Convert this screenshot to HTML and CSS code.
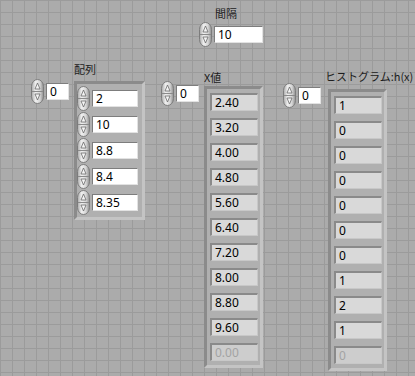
FILE: index.html
```html
<!DOCTYPE html>
<html lang="ja">
<head>
  <meta charset="UTF-8" />
  <title>Histogram panel</title>
  <link rel="stylesheet" href="styles.css">
</head>
<body>

  <!-- shared spinner glyph -->
  <svg class="defs" width="0" height="0">
    <defs>
      <linearGradient id="pillg" x1="0" y1="0" x2="1" y2="0">
        <stop offset="0" stop-color="#a9a9a9"/>
        <stop offset="0.35" stop-color="#f0f0f0"/>
        <stop offset="0.7" stop-color="#d6d6d6"/>
        <stop offset="1" stop-color="#8e8e8e"/>
      </linearGradient>
      <symbol id="spin" viewBox="0 0 13 25">
        <rect x="0.5" y="0.5" width="12" height="24" rx="6" ry="7" fill="url(#pillg)" stroke="#7c7c7c"/>
        <line x1="1" y1="12.5" x2="12" y2="12.5" stroke="#8a8a8a"/>
        <polygon points="6.5,4 4,10 9,10" fill="#f4f4f4" stroke="#6a6a6a" stroke-width="0.8"/>
        <polygon points="6.5,21 4,15 9,15" fill="#f4f4f4" stroke="#6a6a6a" stroke-width="0.8"/>
      </symbol>
    </defs>
  </svg>

  <div class="panel">

    <!-- 間隔 -->
    <div class="interval">
      <div class="label interval-label">間隔</div>
      <div class="numeric">
        <svg class="spin"><use href="#spin"/></svg>
        <div class="box box-wide">10</div>
      </div>
    </div>

    <div class="arrays">

      <!-- 配列 -->
      <div class="group group-src">
        <div class="numeric index">
          <svg class="spin"><use href="#spin"/></svg>
          <div class="box box-index">0</div>
        </div>
        <div class="col">
          <div class="label">配列</div>
          <div class="frame frame-ctl">
            <div class="numeric"><svg class="spin"><use href="#spin"/></svg><div class="box">2</div></div>
            <div class="numeric"><svg class="spin"><use href="#spin"/></svg><div class="box">10</div></div>
            <div class="numeric"><svg class="spin"><use href="#spin"/></svg><div class="box">8.8</div></div>
            <div class="numeric"><svg class="spin"><use href="#spin"/></svg><div class="box">8.4</div></div>
            <div class="numeric"><svg class="spin"><use href="#spin"/></svg><div class="box">8.35</div></div>
          </div>
        </div>
      </div>

      <!-- X値 -->
      <div class="group group-x">
        <div class="numeric index">
          <svg class="spin"><use href="#spin"/></svg>
          <div class="box box-index">0</div>
        </div>
        <div class="col">
          <div class="label">X値</div>
          <div class="frame frame-ind">
            <div class="ind">2.40</div>
            <div class="ind">3.20</div>
            <div class="ind">4.00</div>
            <div class="ind">4.80</div>
            <div class="ind">5.60</div>
            <div class="ind">6.40</div>
            <div class="ind">7.20</div>
            <div class="ind">8.00</div>
            <div class="ind">8.80</div>
            <div class="ind">9.60</div>
            <div class="ind empty">0.00</div>
          </div>
        </div>
      </div>

      <!-- ヒストグラム -->
      <div class="group group-hist">
        <div class="numeric index">
          <svg class="spin"><use href="#spin"/></svg>
          <div class="box box-index">0</div>
        </div>
        <div class="col">
          <div class="label">ヒストグラム:h(x)</div>
          <div class="frame frame-ind">
            <div class="ind">1</div>
            <div class="ind">0</div>
            <div class="ind">0</div>
            <div class="ind">0</div>
            <div class="ind">0</div>
            <div class="ind">0</div>
            <div class="ind">0</div>
            <div class="ind">1</div>
            <div class="ind">2</div>
            <div class="ind">1</div>
            <div class="ind empty">0</div>
          </div>
        </div>
      </div>

    </div>
  </div>

</body>
</html>
```

FILE: styles.css
```css
* {
  box-sizing: border-box;
  margin: 0;
  padding: 0;
}

body {
  width: 415px;
  height: 376px;
  overflow: hidden;
  background-color: #ababab;
  background-image:
    linear-gradient(#9b9b9b 1px, transparent 1px),
    linear-gradient(90deg, #9b9b9b 1px, transparent 1px);
  background-size: 12px 12px;
  font-family: 'Noto Sans', 'Noto Sans CJK JP', sans-serif;
  font-size: 12px;
  color: #000;
}

.defs {
  display: block;
}

.panel {
  padding-top: 6px;
}

.label {
  font-family: 'Noto Sans CJK JP', sans-serif;
  font-size: 11px;
  line-height: 14px;
  height: 14px;
  color: #1c1c1c;
  white-space: nowrap;
}

/* 間隔 */
.interval {
  margin-left: 199px;
}

.interval-label {
  margin-left: 16px;
  margin-bottom: 2px;
}

/* numeric control: spinner + white box */
.numeric {
  display: flex;
  align-items: center;
  height: 25px;
}

.spin {
  width: 13px;
  height: 25px;
  flex: none;
}

.box {
  width: 48px;
  height: 17px;
  margin-left: 2px;
  padding-left: 3px;
  line-height: 16px;
  background: #fff;
  border-top: 1px solid #7d7d7d;
  border-left: 1px solid #7d7d7d;
  border-right: 1px solid #e2e2e2;
  border-bottom: 1px solid #e2e2e2;
}

.box-wide {
  width: 49px;
}

.box-index {
  width: 23px;
}

/* array rows */
.arrays {
  display: flex;
  align-items: flex-start;
}

.group {
  display: flex;
  align-items: flex-start;
}

.group-src {
  margin-left: 31px;
  margin-top: 15px;
}

.group-x {
  margin-left: 16px;
  margin-top: 23px;
}

.group-hist {
  margin-left: 20px;
  margin-top: 22px;
}

.group-src .index { margin-top: 17px; }
.group-x .index { margin-top: 11px; }
.group-hist .index { margin-top: 14px; }

.col {
  display: flex;
  flex-direction: column;
  margin-left: 5px;
}

.group-hist .col {
  margin-left: 7px;
}

.group-src .label { margin-bottom: 5px; }
.group-x .label { margin-bottom: 2px; }
.group-hist .label { margin-bottom: 6px; margin-left: -3px; }

.frame {
  display: flex;
  flex-direction: column;
  background: #b0b0b0;
  border: 3px solid;
  border-color: #8b8b8b #c4c4c4 #c4c4c4 #8b8b8b;
}

.frame-ctl {
  width: 71px;
  padding: 2px 4px 2px 0;
  gap: 1px;
}

.frame-ind {
  width: 59px;
  padding: 4px 3px 4px 3px;
  gap: 7px;
}

.ind {
  width: 48px;
  height: 18px;
  padding-left: 3px;
  line-height: 15px;
  background: #d9d9d9;
  border-top: 2px solid #8a8a8a;
  border-left: 2px solid #8a8a8a;
  border-right: 1px solid #c8c8c8;
  border-bottom: 1px solid #c8c8c8;
}

.ind.empty {
  color: #a3a3a3;
  background: #cdcdcd;
}
```
